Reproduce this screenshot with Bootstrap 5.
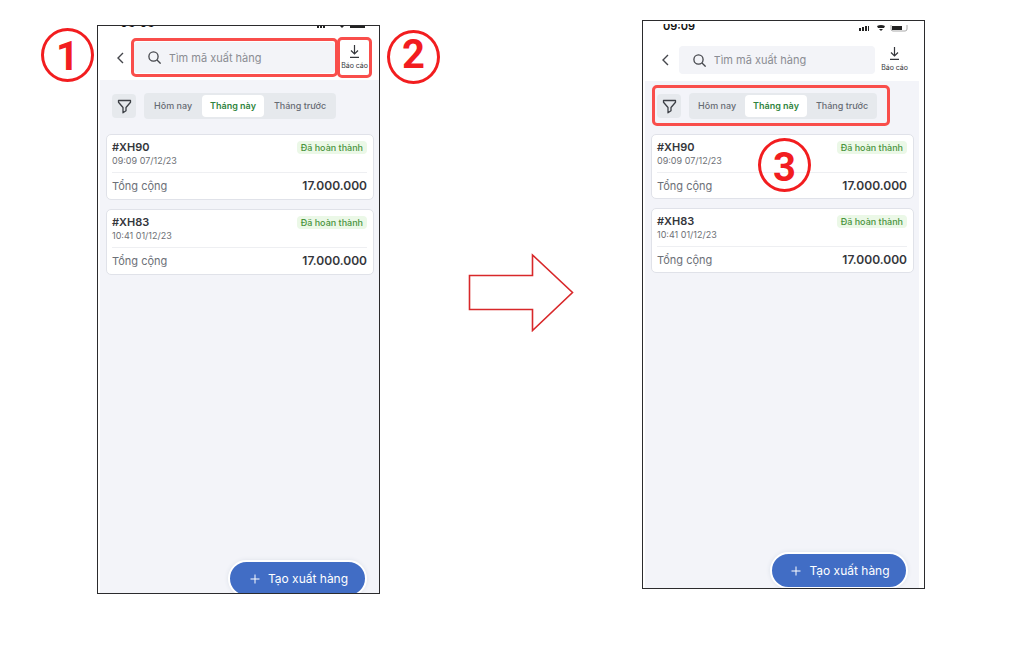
<!DOCTYPE html>
<html lang="vi">
<head>
<meta charset="utf-8">
<meta name="viewport" content="width=device-width, initial-scale=1">
<title>Xuất hàng</title>
<link href="https://cdn.jsdelivr.net/npm/bootstrap@5.3.0/dist/css/bootstrap.min.css" rel="stylesheet">
<style>
body{font-family:Inter,"Noto Sans",sans-serif;background:#fff;color:#34363b;line-height:16px}
.guide{display:grid;grid-template-columns:97fr 283fr 262fr 283fr 99fr;align-items:start}
.phone{height:569px;border:1px solid #2b2b2d;background:#fff}
.phone-1{margin-top:25px}
.phone-2{margin-top:20px}
.screen{height:100%;overflow:hidden}
.status{overflow:hidden;color:#111}
.phone-1 .status{height:2px;padding:0 10px 0 22px}
.phone-2 .screen{padding-top:3px}
.phone-2 .status{height:8px;padding:0 13px 0 20px}
.clock{font-size:12px;font-weight:600}
.phone-1 .clock{margin-top:-11px}
.phone-2 .clock{margin-top:-6px;font-size:11px}
.phone-1 .signals{margin-top:-6px}
.phone-2 .signals{margin-top:-2px}
.top{padding:7px 11px 0 17px}
.phone-1 .top{height:52px}
.phone-2 .top{height:49px;padding-right:16px}
.back{width:12px}
.find{height:31px;background:#f3f4f8;border-radius:4px;margin-left:8px;margin-right:6px;padding:0 14px;gap:8px}
.phone-2 .find{height:28px}
.find input{font-size:11px;line-height:16px;color:#34363b;min-width:0}
.find input::placeholder{color:#8b8d93;opacity:1}
.report{font-size:7px;line-height:10px;color:#34363b;width:28px;white-space:nowrap;gap:3px}
.content{background:#f3f4f9;margin-left:2px;height:514px}
.phone-1 .content{padding:13px 5px 0 6px}
.phone-2 .content{padding:12px 5px 0 6px;margin-right:5px}
.filters{gap:8px;padding-left:6px}
.funnel{width:24px;height:24px;background:#e6e9ed;border-radius:4px}
.segments{height:26px;background:#e6e9ed;border-radius:4px;padding:2px 0}
.segments button{font-size:9px;line-height:14px;color:#666b73;border-radius:4px;padding:0 10px;font-weight:500;white-space:nowrap}
.segments .current{background:#fff;color:#2f8440;font-weight:600;padding:0 8px}
.phone-2 .segments button{padding:0 9px}
.phone-2 .segments .current{padding:0 8px}
.orders{gap:9px;margin-top:15px}
.order{border:1px solid #e0e2e9;border-radius:5px;background:#fff;padding:4px 6px 0 5px;height:66px}
.order h2{font-size:11px;line-height:16px;font-weight:600}
.order time{display:block;font-size:9px;line-height:12px;color:#6d7076}
.done{font-size:9px;line-height:13px;font-weight:500;color:#49943d;background:#ebf8e7;border-radius:4px;padding:0 4px;margin-top:2px}
.sum{border-top:1px solid #eeeff2;margin-top:5px;padding-top:5px;font-size:11px;line-height:16px;color:#6c7077}
.sum strong{font-size:12px;font-weight:600;color:#34363b}
.phone-2 .order{height:65px}
.create{right:12px;bottom:-4px;width:139px;height:37px;border:2px solid #fff;border-radius:19px;background:#416dc5;color:#fff;font-size:12px;gap:8px;box-shadow:0 0 4px #dde1ea}
.create svg{margin-left:3px}
.phone-2 .create{right:16px;bottom:-1px;width:138px}
.clip{inset:0;overflow:hidden;pointer-events:none}
.clip button{pointer-events:auto}
.hl{border:3px solid #f94e4b;border-radius:5px;pointer-events:none}
.hl-find{left:33px;right:41px;top:12px;height:39px}
.hl-report{right:7px;width:35px;top:11px;height:41px}
.hl-filter{left:9px;right:34px;top:64px;height:41px}
.num{width:53px;height:54px;border:3px solid #f21d1f;border-radius:50%;color:#f21d1f;font-family:Roboto,sans-serif;font-size:40px;line-height:52px;font-weight:700}
.num-1{left:-57px;top:2px}
.num-2{right:-61px;top:4px;line-height:44px}
.num-3{left:115px;top:117px;line-height:54px}
.flow-arrow{width:106px;margin-top:253px;margin-left:88px}
</style>
</head>
<body>
<main class="guide">
<section class="phone phone-1 position-relative" style="grid-column:2">
  <div class="screen">
    <div class="status d-flex justify-content-between"><span class="clock">09:09</span>
      <svg class="signals" width="54" height="8" viewBox="0 0 54 8" fill="#222"><path d="M2 4h2v4H2zM5 3h2v5H5zM8 2h2v6H8zM24 5l3 3 3-3zM35 1h15v7H35z"/></svg></div>
    <header class="top d-flex align-items-center">
      <button class="back btn p-0 border-0 d-flex justify-content-center" aria-label="Quay lại"><svg width="8" height="12" fill="none" stroke="#44464b" stroke-width="1.4"><path d="M7 1 2 6l5 5"/></svg></button>
      <div class="find d-flex align-items-center flex-grow-1">
        <svg class="flex-shrink-0" width="13" height="13" fill="none" stroke="#44464b" stroke-width="1.3"><circle cx="5.5" cy="5.5" r="4.6"/><path d="m9 9 3.6 3.6"/></svg>
        <input class="form-control border-0 bg-transparent p-0 shadow-none" type="search" aria-label="Tìm mã xuất hàng" placeholder="Tìm mã xuất hàng"></div>
      <button class="report btn p-0 border-0 d-flex flex-column align-items-center"><svg width="11" height="13" fill="none" stroke="#34363b" stroke-width="1.2"><path d="M5.5 0v9M2 5.500 5.500 9 9 5.500M1 12.300h9"/></svg>Báo cáo</button>
    </header>
    <div class="content">
      <div class="filters d-flex align-items-center">
        <button class="funnel btn p-0 border-0 d-flex align-items-center justify-content-center" aria-label="Bộ lọc"><svg width="15" height="15" fill="none" stroke="#3c3f45" stroke-width="1.3" stroke-linejoin="round"><path d="M1.500 1.500h12v1.800L9 8.500v3.200L6 13.800V8.500L1.500 3.300z"/></svg></button>
        <div class="segments d-flex" role="group"><button class="btn border-0">Hôm nay</button><button class="btn border-0 current">Tháng này</button><button class="btn border-0">Tháng trước</button></div>
      </div>
      <div class="orders d-flex flex-column">
        <article class="order"><div class="d-flex justify-content-between align-items-start"><div><h2 class="m-0">#XH90</h2><time>09:09 07/12/23</time></div><span class="done">Đã hoàn thành</span></div><div class="sum d-flex justify-content-between"><span>Tổng cộng</span><strong>17.000.000</strong></div></article>
        <article class="order"><div class="d-flex justify-content-between align-items-start"><div><h2 class="m-0">#XH83</h2><time>10:41 01/12/23</time></div><span class="done">Đã hoàn thành</span></div><div class="sum d-flex justify-content-between"><span>Tổng cộng</span><strong>17.000.000</strong></div></article>
      </div>
    </div>
  </div>
  <div class="clip position-absolute"><button class="create btn p-0 position-absolute d-flex align-items-center justify-content-center"><svg width="10" height="10" stroke="#fff"><path d="M5 .5v9M.5 5h9"/></svg>Tạo xuất hàng</button></div>
  <div class="hl hl-find position-absolute"></div>
  <div class="hl hl-report position-absolute"></div>
  <div class="num num-1 position-absolute text-center">1</div>
  <div class="num num-2 position-absolute text-center">2</div>
</section>

<svg class="flow-arrow" viewBox="0 0 106 79" fill="none" stroke="#d8282a" stroke-width="1.6"><path d="M1.500 22.500H64.500V2L104.500 39.500 64.500 77.500V56.500H1.500z"/></svg>

<section class="phone phone-2 position-relative">
  <div class="screen">
    <div class="status d-flex justify-content-between"><span class="clock">09:09</span>
      <svg class="signals" width="54" height="10" viewBox="0 0 54 10" fill="#222"><path d="M2 6h2v3H2zM5 5h2v4H5zM8 4h2v5H8zM11 4h1v5h-1zM20 4q4-2 8 0l-1 2h-6zM22 7h4l-2 2zM35 4h10v4H35z"/><path d="M34 3v4q0 2 2 2h12q2 0 2-2V3" fill="none" stroke="#aaa"/></svg></div>
    <header class="top d-flex align-items-center">
      <button class="back btn p-0 border-0 d-flex justify-content-center" aria-label="Quay lại"><svg width="8" height="12" fill="none" stroke="#44464b" stroke-width="1.4"><path d="M7 1 2 6l5 5"/></svg></button>
      <div class="find d-flex align-items-center flex-grow-1">
        <svg class="flex-shrink-0" width="13" height="13" fill="none" stroke="#44464b" stroke-width="1.3"><circle cx="5.5" cy="5.5" r="4.6"/><path d="m9 9 3.6 3.6"/></svg>
        <input class="form-control border-0 bg-transparent p-0 shadow-none" type="search" aria-label="Tìm mã xuất hàng" placeholder="Tìm mã xuất hàng"></div>
      <button class="report btn p-0 border-0 d-flex flex-column align-items-center"><svg width="11" height="13" fill="none" stroke="#34363b" stroke-width="1.2"><path d="M5.500 0v9M2 5.500 5.500 9 9 5.500M1 12.300h9"/></svg>Báo cáo</button>
    </header>
    <div class="content">
      <div class="filters d-flex align-items-center">
        <button class="funnel btn p-0 border-0 d-flex align-items-center justify-content-center" aria-label="Bộ lọc"><svg width="15" height="15" fill="none" stroke="#3c3f45" stroke-width="1.3" stroke-linejoin="round"><path d="M1.500 1.500h12v1.800L9 8.500v3.200L6 13.800V8.500L1.500 3.300z"/></svg></button>
        <div class="segments d-flex" role="group"><button class="btn border-0">Hôm nay</button><button class="btn border-0 current">Tháng này</button><button class="btn border-0">Tháng trước</button></div>
      </div>
      <div class="orders d-flex flex-column">
        <article class="order"><div class="d-flex justify-content-between align-items-start"><div><h2 class="m-0">#XH90</h2><time>09:09 07/12/23</time></div><span class="done">Đã hoàn thành</span></div><div class="sum d-flex justify-content-between"><span>Tổng cộng</span><strong>17.000.000</strong></div></article>
        <article class="order"><div class="d-flex justify-content-between align-items-start"><div><h2 class="m-0">#XH83</h2><time>10:41 01/12/23</time></div><span class="done">Đã hoàn thành</span></div><div class="sum d-flex justify-content-between"><span>Tổng cộng</span><strong>17.000.000</strong></div></article>
      </div>
    </div>
  </div>
  <div class="clip position-absolute"><button class="create btn p-0 position-absolute d-flex align-items-center justify-content-center"><svg width="10" height="10" stroke="#fff"><path d="M5 .5v9M.5 5h9"/></svg>Tạo xuất hàng</button></div>
  <div class="hl hl-filter position-absolute"></div>
  <div class="num num-3 position-absolute text-center">3</div>
</section>
</main>
<script src="https://cdn.jsdelivr.net/npm/bootstrap@5.3.0/dist/js/bootstrap.bundle.min.js"></script>
</body>
</html>
